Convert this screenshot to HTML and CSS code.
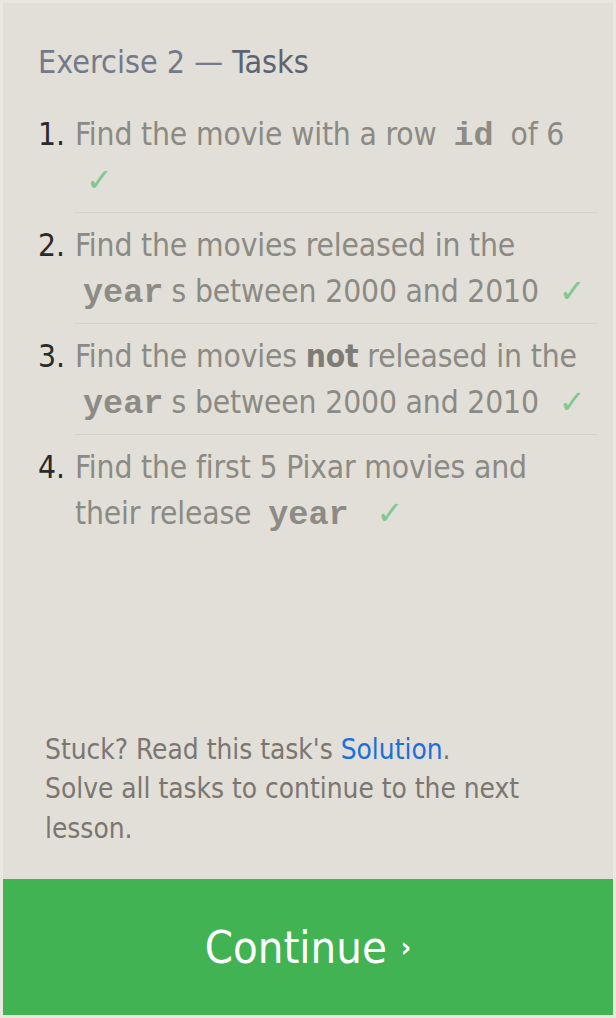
FILE: index.html
```html
<!DOCTYPE html>
<html>
<head>
<meta charset="utf-8">
<link rel="stylesheet" href="styles.css">
</head>
<body>
<div class="page">
  <div class="panel">
    <h1 class="title">Exercise 2 — <span class="title-strong">Tasks</span></h1>
    <ol class="tasks">
      <li class="task"><span class="num">1.</span><span class="text">Find the movie with a row <code>id</code> of 6 <span class="check">✓</span></span></li>
      <li class="task"><span class="num">2.</span><span class="text">Find the movies released in the <code>year</code>s between 2000 and 2010 <span class="check">✓</span></span></li>
      <li class="task"><span class="num">3.</span><span class="text">Find the movies <strong>not</strong> released in the <code>year</code>s between 2000 and 2010 <span class="check">✓</span></span></li>
      <li class="task last"><span class="num">4.</span><span class="text">Find the first 5 Pixar movies and their release <code>year</code> <span class="check">✓</span></span></li>
    </ol>
    <div class="spacer"></div>
    <p class="help">Stuck? Read this task's <a class="link" href="#">Solution</a>.<br>Solve all tasks to continue to the next lesson.</p>
  </div>
  <a class="continue" href="#">Continue <span class="chev">›</span></a>
</div>
</body>
</html>
```

FILE: styles.css
```css
html, body {
  margin: 0;
  padding: 0;
}
body {
  background: #e9e7e0;
  font-family: "DejaVu Sans Condensed", "DejaVu Sans", sans-serif;
}
.page {
  margin: 3px;
  height: 1012px;
  background: #e1dfd7;
  display: flex;
  flex-direction: column;
}
.panel {
  flex: 1;
  display: flex;
  flex-direction: column;
  padding: 39px 16px 0 35px;
}
.title {
  margin: 0 0 20px 0;
  font-weight: normal;
  font-size: 32px;
  line-height: 40px;
  color: #747a8a;
}
.title-strong {
  color: #5d6372;
}
.tasks {
  list-style: none;
  margin: 0;
  padding: 0;
}
.task {
  display: flex;
  font-size: 31.5px;
  line-height: 46px;
  color: #8b8a84;
  padding: 9px 0 0 0;
}
.task .num {
  width: 37px;
  flex: none;
  color: #2a2a2a;
}
.task .text {
  flex: 1;
  border-bottom: 1px solid #d5d2c7;
  padding-bottom: 9px;
  letter-spacing: -0.15px;
}
.task.last .text {
  border-bottom: none;
}
code {
  font-family: "Liberation Mono", monospace;
  font-weight: bold;
  font-size: 33.5px;
  line-height: 0;
  letter-spacing: 0;
  color: #8c8b86;
  padding: 0 8px;
}
strong {
  color: #7d7c77;
}
.check {
  color: #7fc98f;
  margin-left: 11px;
  font-family: "DejaVu Sans", sans-serif;
  font-size: 32px;
  line-height: 0;
}
.spacer {
  flex: 1;
}
.help {
  margin: 0 0 31px 7px;
  font-size: 27.8px;
  line-height: 39.5px;
  color: #7b7672;
}
.link {
  color: #1a6fdc;
  text-decoration: none;
}
.continue {
  flex: none;
  height: 136px;
  background: #41b353;
  color: #ffffff;
  text-decoration: none;
  font-size: 45px;
  display: flex;
  align-items: center;
  justify-content: center;
}
.chev {
  font-size: 28px;
  font-weight: bold;
  margin-left: 14px;
}
```
